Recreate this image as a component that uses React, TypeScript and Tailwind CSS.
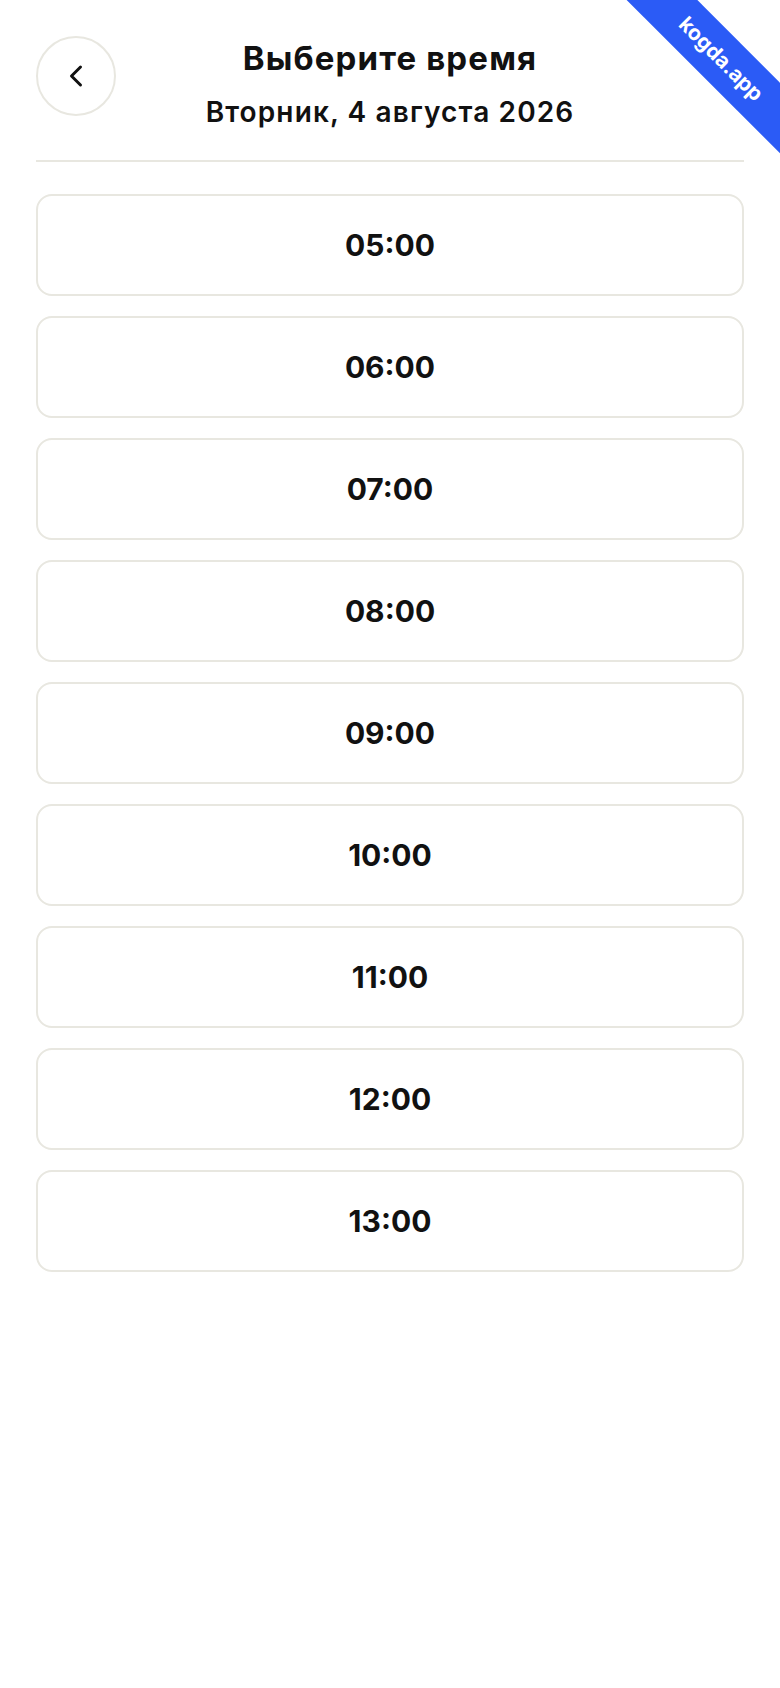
import React from 'react';
import { ChevronLeft } from 'lucide-react';

const times = ['05:00', '06:00', '07:00', '08:00', '09:00', '10:00', '11:00', '12:00', '13:00'];

export default function App() {
  return (
    <div
      className="relative min-h-screen overflow-hidden bg-white text-[#111111]"
      style={{ fontFamily: 'Inter, "Noto Sans", sans-serif' }}
    >
      {/* corner ribbon */}
      <div className="absolute top-[34px] right-[-91px] flex h-[50px] w-[300px] rotate-45 items-center justify-center bg-[#2b5bf6]">
        <span className="text-[21px] font-bold text-white">kogda.app</span>
      </div>

      <div className="px-9 pt-9">
        <div className="grid grid-cols-[80px_1fr_80px] items-start border-b-2 border-[#e8e7e0] pb-8">
          <button className="flex h-20 w-20 items-center justify-center rounded-full border-2 border-[#e8e7e0]">
            <ChevronLeft size={36} strokeWidth={2} />
          </button>
          <div className="mt-[2px] text-center">
            <h1 className="text-[33px] font-bold leading-10 tracking-[0.035em]">Выберите время</h1>
            <p className="mt-[18px] text-[28px] font-semibold leading-8 tracking-[0.04em]">
              Вторник, 4 августа 2026
            </p>
          </div>
          <div />
        </div>

        <div className="mt-8 flex flex-col gap-5">
          {times.map((t) => (
            <button
              key={t}
              className="flex h-[102px] items-center justify-center rounded-2xl border-2 border-[#e8e7e0] bg-white text-[30px] font-bold"
            >
              {t}
            </button>
          ))}
        </div>
      </div>
    </div>
  );
}
